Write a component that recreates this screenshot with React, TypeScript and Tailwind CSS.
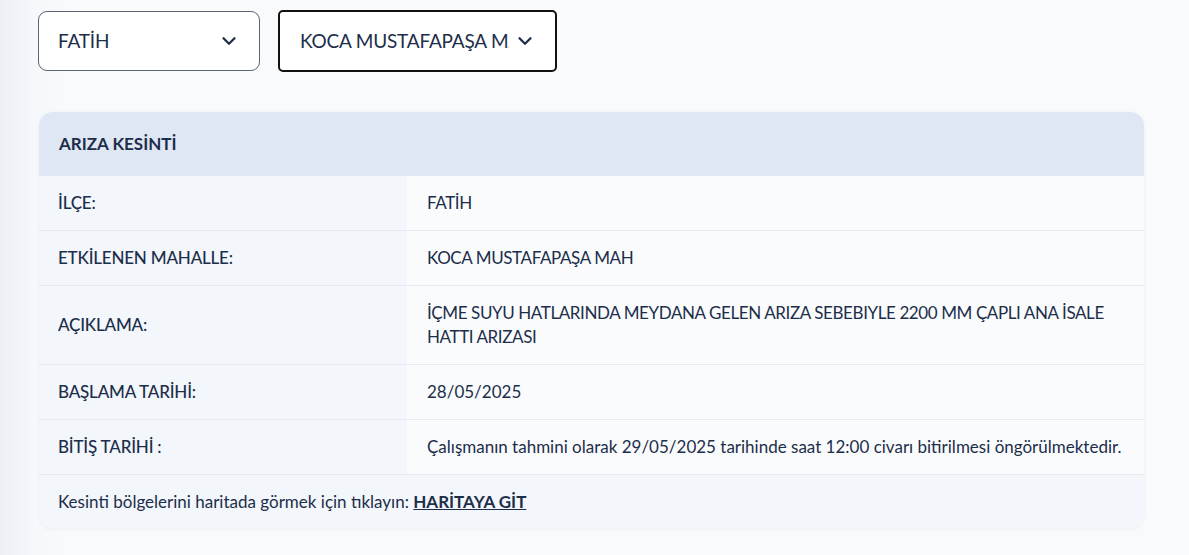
import { ChevronDown } from 'lucide-react';

const rows = [
    { label: 'İLÇE:', value: 'FATİH', caps: true },
    { label: 'ETKİLENEN MAHALLE:', value: 'KOCA MUSTAFAPAŞA MAH', caps: true },
    {
        label: 'AÇIKLAMA:',
        value: 'İÇME SUYU HATLARINDA MEYDANA GELEN ARIZA SEBEBIYLE 2200 MM ÇAPLI ANA İSALE HATTI ARIZASI',
        caps: true,
        tall: true
    },
    { label: 'BAŞLAMA TARİHİ:', value: '28/05/2025' },
    {
        label: 'BİTİŞ TARİHİ :',
        value: 'Çalışmanın tahmini olarak 29/05/2025 tarihinde saat 12:00 civarı bitirilmesi öngörülmektedir.'
    }
];

export default function App() {
    return (
        <div
            className="w-[1189px] h-[555px] overflow-hidden bg-[linear-gradient(to_right,#eceff4_0px,#f6f8fb_36px,#f8fafc_70px)] text-[#1c2e4a]"
            style={{ fontFamily: 'Lato, "Noto Sans", sans-serif' }}
        >
            <div className="pl-[38px] pr-[45px] pt-[10px]">
                {/* district / neighbourhood pickers */}
                <div className="flex items-center gap-[18px]">
                    <button className="flex items-center justify-between w-[222px] h-[60px] pl-[19px] pr-[19px] rounded-[9px] border border-[#5b6472] bg-white text-[19px] tracking-[-0.2px] text-[#1c2e4a]">
                        <span>FATİH</span>
                        <ChevronDown size={22} strokeWidth={2.5} />
                    </button>
                    <button className="flex items-center justify-between w-[279px] h-[62px] pl-[20px] pr-[19px] rounded-[5px] border-2 border-[#111] bg-white text-[19px] tracking-[-0.2px] text-[#1c2e4a]">
                        <span className="whitespace-nowrap overflow-hidden w-[209px] text-left">KOCA MUSTAFAPAŞA MAH</span>
                        <ChevronDown size={22} strokeWidth={2.5} />
                    </button>
                </div>

                {/* outage detail card */}
                <div className="mt-[40px] ml-px w-[1105px] rounded-[14px] overflow-hidden bg-[#fafbfd] shadow-[0_1px_4px_rgba(30,50,90,0.06)]">
                    <div className="h-[64px] flex items-center px-[20px] bg-[#dfe7f4] text-[17px] font-bold">
                        ARIZA KESİNTİ
                    </div>
                    {rows.map((row, idx) => (
                        <div
                            key={idx}
                            className={`grid grid-cols-[368px_1fr] border-b border-[#e7ebf1] ${row.tall ? 'h-[79px]' : 'h-[55px]'}`}
                        >
                            <div className="flex items-center px-[19px] bg-[#f3f6fa] text-[17px] font-medium tracking-[-0.2px]">
                                {row.label}
                            </div>
                            <div
                                className={`flex items-center pl-[20px] pr-[20px] text-[17px] leading-[24px] ${row.caps ? 'tracking-[-0.4px]' : ''}`}
                            >
                                {row.value}
                            </div>
                        </div>
                    ))}
                    <div className="h-[53px] flex items-center px-[19px] bg-[#f3f6fa] text-[17px]">
                        <span>Kesinti bölgelerini haritada görmek için tıklayın:&nbsp;</span>
                        <a className="font-bold underline">HARİTAYA GİT</a>
                    </div>
                </div>
            </div>
        </div>
    );
}
